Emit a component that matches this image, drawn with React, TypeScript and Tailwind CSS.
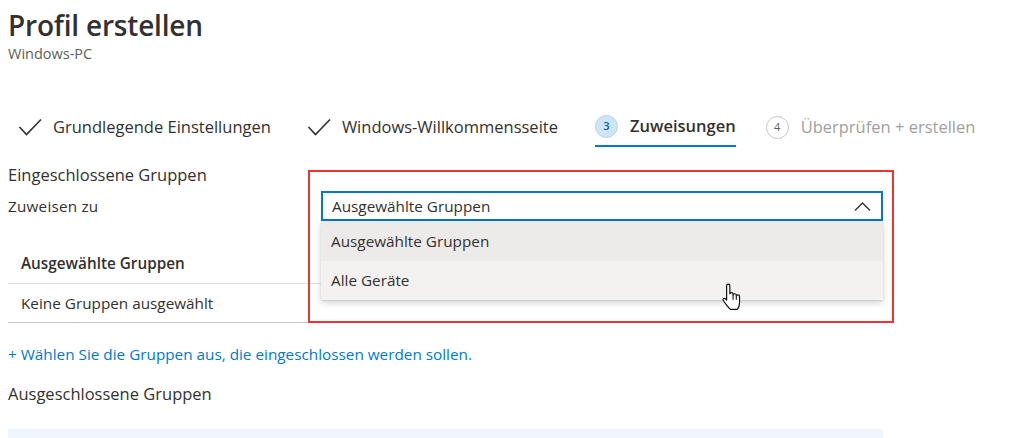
import React from "react";

const Check = () => (
  <svg width="24" height="18" viewBox="0 0 24 18" className="shrink-0">
    <path d="M1.5 9 L8.5 16.5 L23 1.5" fill="none" stroke="#323130" strokeWidth="1.6" />
  </svg>
);

const Hand = () => (
  <svg width="22" height="28" viewBox="0 0 20 26">
    <path
      d="M5 2.5 Q5 1 6.5 1 Q8 1 8 2.5 V10 Q8 9 9.5 9 Q11 9 11 10.5 V11 Q11 10 12.5 10 Q14 10 14 11.5 V12 Q14 11 15.5 11 Q17 11 17 12.5 V18 Q17 22 15 24.5 H8.5 Q6.5 22.5 5 20.5 L2 16.5 Q1.2 15.2 2.3 14.5 Q3.3 13.9 4.3 15 L5 16 Z"
      fill="#fff"
      stroke="#111"
      strokeWidth="1.1"
      strokeLinejoin="round"
    />
    <path d="M11 11 V15.5 M14 12 V15.5" stroke="#111" strokeWidth="1" fill="none" />
  </svg>
);

export default function App() {
  return (
    <div
      className="relative w-[1012px] h-[438px] overflow-hidden bg-white text-[#323130]"
      style={{ fontFamily: '"Open Sans", "Noto Sans", sans-serif' }}
    >
      {/* Header */}
      <div className="pl-2 pt-[7px]">
        <h1 className="text-[28px] leading-[36px] font-semibold text-[#323130] tracking-[-0.2px]">Profil erstellen</h1>
        <div className="text-[14.5px] leading-[18px] text-[#605e5c] mt-[2px]">Windows-PC</div>
      </div>

      {/* Tabs */}
      <div className="flex items-start mt-[46px] pl-[18px]">
        <div className="flex items-center h-[36px] gap-[11px]">
          <Check />
          <span className="text-[16.5px] leading-[24px]">Grundlegende Einstellungen</span>
        </div>
        <div className="flex items-center h-[36px] gap-[11px] ml-[36px]">
          <Check />
          <span className="text-[16.5px] leading-[24px]">Windows-Willkommensseite</span>
        </div>
        <div className="flex items-center h-[38px] pb-[2px] gap-[12px] ml-[37px] border-b-[2px] border-[#0078d4]">
          <div className="w-[23px] h-[23px] rounded-full bg-[#cfe4f6] border border-[#b3d4f1] flex items-center justify-center text-[11px] font-semibold text-[#0063b1]">
            3
          </div>
          <span className="text-[16.5px] leading-[24px] font-semibold">Zuweisungen</span>
        </div>
        <div className="flex items-center h-[36px] gap-[12px] ml-[30px]">
          <div className="w-[23px] h-[23px] rounded-full bg-white border border-[#c8c6c4] flex items-center justify-center text-[11px] text-[#605e5c]">
            4
          </div>
          <span className="text-[16.5px] leading-[24px] text-[#a19f9d]">Überprüfen + erstellen</span>
        </div>
      </div>

      {/* Content */}
      <div className="ml-2 w-[875px]">
        <div className="mt-[16px] text-[16.5px] leading-[24px]">Eingeschlossene Gruppen</div>

        <div className="flex items-center mt-[4px] relative z-10">
          <div className="w-[313px] text-[15.3px] leading-[20px] tracking-[0.2px]">Zuweisen zu</div>
          <div className="relative flex-1">
            <div className="h-[30px] border-2 border-[#0078d4] bg-white flex items-center justify-between pl-[9px] pr-[10px]">
              <span className="text-[15.3px] leading-[20px]">Ausgewählte Gruppen</span>
              <svg width="17" height="9" viewBox="0 0 17 9">
                <path d="M1 8.5 L8.5 1 L16 8.5" fill="none" stroke="#323130" strokeWidth="1.3" />
              </svg>
            </div>
            <div className="absolute left-0 right-0 top-full shadow-[0_3px_7px_rgba(0,0,0,0.16),0_1px_2px_rgba(0,0,0,0.1)]">
              <div className="h-[40px] bg-[#edebe9] flex items-center pl-[10px] text-[15.3px]">Ausgewählte Gruppen</div>
              <div className="h-[39px] bg-[#f3f2f1] flex items-center pl-[10px] text-[15.3px] relative">
                Alle Geräte
                <div className="absolute left-[400px] top-[22px]">
                  <Hand />
                </div>
              </div>
            </div>
          </div>
        </div>

        <div className="mt-[23px]">
          <div className="h-[40px] flex items-center pl-[13px] border-b border-[#e1dfdd]">
            <span className="text-[15.3px] font-semibold">Ausgewählte Gruppen</span>
          </div>
          <div className="h-[39px] flex items-center pl-[13px] border-b border-[#c8c6c4]">
            <span className="text-[15.3px]">Keine Gruppen ausgewählt</span>
          </div>
        </div>

        <div className="mt-[21px] text-[15.3px] leading-[20px] text-[#0078d4]">
          + Wählen Sie die Gruppen aus, die eingeschlossen werden sollen.
        </div>

        <div className="mt-[18px] text-[16.5px] leading-[24px]">Ausgeschlossene Gruppen</div>

        <div className="mt-[23px] h-[40px] bg-[#eff6fc]" />
      </div>

      {/* Annotation */}
      <div className="absolute left-[308px] top-[170px] w-[586px] h-[153px] border-2 border-[#ee3333] z-20 pointer-events-none" />
    </div>
  );
}
